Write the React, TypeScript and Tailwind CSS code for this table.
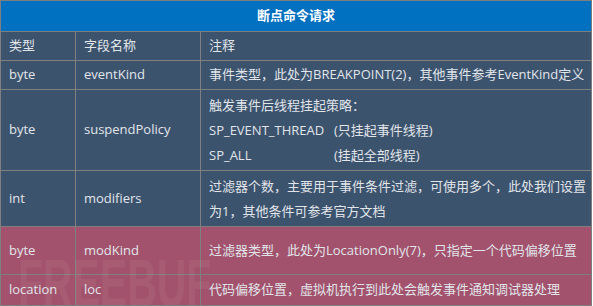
const FONT = "font-['Open_Sans','Noto_Sans_CJK_SC',sans-serif]";

type Row = { type: string; name: string; note: React.ReactNode; h: string; pink?: boolean };

const ROWS: Row[] = [
  { type: "byte", name: "eventKind", note: "事件类型，此处为BREAKPOINT(2)，其他事件参考EventKind定义", h: "h-[28px]" },
  {
    type: "byte",
    name: "suspendPolicy",
    h: "h-[80px]",
    note: (
      <div className="leading-[25px]">
        <div>触发事件后线程挂起策略：</div>
        <div>
          <span className="inline-block w-[125px]">SP_EVENT_THREAD</span>(只挂起事件线程)
        </div>
        <div>
          <span className="inline-block w-[125px]">SP_ALL</span>(挂起全部线程)
        </div>
      </div>
    ),
  },
  {
    type: "int",
    name: "modifiers",
    h: "h-[55px]",
    note: (
      <div className="leading-[25px]">
        过滤器个数，主要用于事件条件过滤，可使用多个，此处我们设置
        <br />
        为1，其他条件可参考官方文档
      </div>
    ),
  },
  { type: "byte", name: "modKind", note: "过滤器类型，此处为LocationOnly(7)，只指定一个代码偏移位置", h: "h-[47px]", pink: true },
  { type: "location", name: "loc", note: "代码偏移位置，虚拟机执行到此处会触发事件通知调试器处理", h: "h-[30px]", pink: true },
];

function Cells({ a, b, c, h, bg, last }: { a: React.ReactNode; b: React.ReactNode; c: React.ReactNode; h: string; bg: string; last?: boolean }) {
  return (
    <div className={`flex ${h} ${bg} ${last ? "" : "border-b border-[#7f7f7f]"}`}>
      <div className="flex w-[75px] shrink-0 items-center border-r border-[#7f7f7f] pl-2">{a}</div>
      <div className="flex w-[125px] shrink-0 items-center border-r border-[#7f7f7f] pl-2">{b}</div>
      <div className="flex flex-1 items-center pl-2">{c}</div>
    </div>
  );
}

export default function App() {
  return (
    <div className={`${FONT} h-[306px] w-[593px] bg-white text-[13px] text-[#e1e5ea]`}>
      <div className="relative w-[592px] overflow-hidden border border-[#7f7f7f]">
        <div className="flex h-[31px] items-center justify-center border-b border-[#7f7f7f] bg-[#0070c0] text-[13px] font-bold text-white">
          断点命令请求
        </div>
        <Cells a="类型" b="字段名称" c="注释" h="h-[29px]" bg="bg-[#3c536e]" />
        {ROWS.map((r, i) => (
          <Cells
            key={r.name}
            a={r.type}
            b={r.name}
            c={r.note}
            h={i === ROWS.length - 1 ? r.h : `${r.h} box-content`}
            bg={r.pink ? "bg-[#a2526c]" : "bg-[#3c536e]"}
            last={i === ROWS.length - 1}
          />
        ))}
        <div className="pointer-events-none absolute left-[17px] top-[249px] origin-left scale-x-[0.62] font-['Liberation_Sans',sans-serif] text-[66px] font-bold leading-none text-white/[0.06]">
          FREEBUF
        </div>
      </div>
    </div>
  );
}
